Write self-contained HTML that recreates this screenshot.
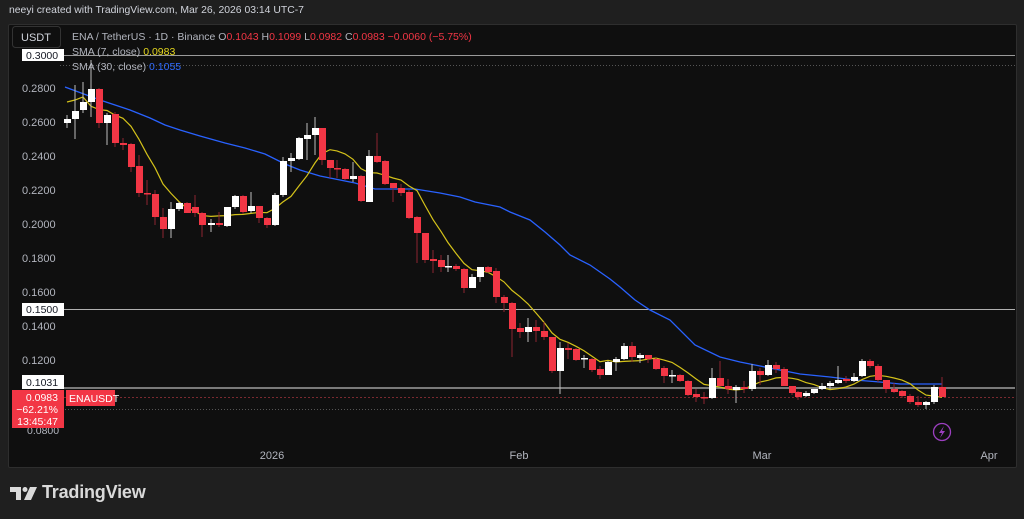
<!DOCTYPE html>
<html><head><meta charset="utf-8"><style>
html,body{margin:0;padding:0;background:#1f1f1f;width:1024px;height:519px;overflow:hidden;font-family:"Liberation Sans",sans-serif}
.t{position:absolute;left:9px;top:5px;color:#d1d4dc;font-size:10.4px}
.panel{position:absolute;left:8px;top:24px;width:1007px;height:442px;background:#0f0f0f;border:1px solid #2e2e2e;border-radius:2px}
svg{position:absolute;left:0;top:0}
.logo{position:absolute;left:42px;top:482px;color:#dadada;font-size:18px;font-weight:bold;letter-spacing:-0.2px}
</style></head><body>
<div class="t">neeyi created with TradingView.com, Mar 26, 2026 03:14 UTC-7</div>
<div class="panel"></div>
<svg id="s" width="1024" height="519" xmlns="http://www.w3.org/2000/svg" font-family="Liberation Sans, sans-serif"></svg>
<div class="logo">TradingView</div>
<script>
const C=[
[67,119,123,115,128,1],[75,119,111,85,139,1],[83,110,102,82,113,1],[91,102,89,60,117,1],[99,89,123,88,128,0],
[107,123,115,113,145,1],[115,114,143,112,147,0],[123,143,145,138,150,0],[131,144,167,143,172,0],[139,166,193,155,197,0],
[147,193,194,180,205,0],[155,194,217,190,225,0],[163,217,229,208,238,0],[171,229,209,202,238,1],[179,209,203,202,211,1],
[187,203,213,202,213,0],[195,207,213,195,217,0],[202,213,225,212,237,0],[211,225,223,219,232,1],[219,223,225,212,227,0],
[227,226,207,207,227,1],[235,207,196,195,209,1],[243,196,212,195,214,0],[251,211,206,192,213,1],[259,206,218,206,223,0],
[267,218,225,217,228,0],[275,225,195,193,226,1],[283,195,161,157,197,1],[291,161,158,153,172,1],[299,159,138,137,160,1],
[307,139,135,123,160,1],[315,135,128,117,155,1],[322,128,160,128,165,0],[330,160,168,160,178,0],[337,168,169,160,178,0],
[345,169,179,168,180,0],[353,179,176,162,182,1],[361,176,201,175,202,0],[369,202,156,150,202,1],[377,156,162,133,163,0],
[385,161,184,160,185,0],[393,183,188,183,202,0],[401,188,193,184,196,0],[409,192,218,190,219,0],[417,217,233,216,263,0],
[425,233,260,233,263,0],[433,259,261,250,273,0],[441,260,267,255,272,0],[448,267,266,255,272,1],[456,266,269,264,271,0],
[464,269,288,268,293,0],[472,288,277,274,288,1],[480,277,267,267,282,1],[488,267,272,266,273,0],[496,271,297,268,303,0],
[504,297,303,295,312,0],[512,303,329,302,357,0],[520,328,332,323,338,0],[528,332,327,318,342,1],[536,327,331,320,342,0],
[544,331,337,322,340,0],[552,337,371,338,373,0],[560,371,348,342,394,1],[568,348,350,343,359,0],[576,349,360,348,361,0],
[584,359,358,355,368,1],[592,359,370,358,372,0],[600,369,375,366,379,0],[608,375,362,361,375,1],[616,362,359,357,371,1],
[624,359,346,343,360,1],[632,346,357,342,362,0],[640,358,355,353,363,1],[648,355,359,355,363,0],[656,359,369,358,370,0],
[664,368,376,366,383,0],[672,376,375,370,383,1],[680,375,381,374,382,0],[688,381,395,380,396,0],[696,394,397,389,402,0],
[704,397,398,392,404,0],[712,398,378,368,399,1],[720,378,386,361,386,0],[728,386,389,379,394,0],[736,390,387,385,403,1],
[744,387,389,381,393,0],[752,389,371,364,391,1],[760,371,375,368,385,0],[768,375,365,360,376,1],[776,365,369,362,373,0],
[784,369,386,367,386,0],[792,386,393,386,395,0],[798,392,397,391,400,0],[806,396,393,391,397,1],[814,393,389,389,394,1],
[822,389,386,383,390,1],[830,386,383,381,389,1],[838,383,380,366,384,1],[846,379,381,376,383,0],[854,381,377,373,382,1],
[862,376,361,359,377,1],[870,361,366,359,368,0],[878,366,380,364,382,0],[886,380,389,380,393,0],[894,389,392,383,393,0],
[902,391,396,390,398,0],[910,396,402,394,404,0],[918,402,405,396,407,0],[926,405,402,401,409,1],[934,402,387,385,404,1],
[942,387,397,377,397,0]];
let h='';
h+=`<line x1="60" y1="55.5" x2="1015" y2="55.5" stroke="#9a9a9a" stroke-width="1"/>`;
h+=`<line x1="60" y1="65.5" x2="1015" y2="65.5" stroke="#555" stroke-dasharray="1,2"/>`;
h+=`<line x1="60" y1="309.5" x2="1015" y2="309.5" stroke="#b0b0b0" stroke-width="1"/>`;
h+=`<line x1="60" y1="388" x2="1015" y2="388" stroke="#7a7a7a" stroke-width="2"/>`;
h+=`<line x1="60" y1="397.5" x2="1015" y2="397.5" stroke="#7a2a30" stroke-dasharray="2,2"/>`;
h+=`<line x1="20" y1="409.5" x2="1015" y2="409.5" stroke="#555" stroke-dasharray="1,2"/>`;
[[0.28,88],[0.26,122],[0.24,156],[0.22,190],[0.20,224],[0.18,258],[0.16,292],[0.14,326],[0.12,360]].forEach(a=>{
h+=`<text x="22" y="${a[1]+4}" fill="#b2b5be" font-size="11">${a[0].toFixed(4)}</text>`;});
const B=[[65,87],[100,100],[130,110],[150,118],[165,125],[180,130],[200,136],[225,143],[245,148],[265,154],[285,164],[300,170],[320,176],[335,179],[355,183],[375,189],[390,189],[415,189],[440,193],[460,197],[475,202],[500,207],[510,212],[530,220],[545,232],[560,245],[570,255],[590,265],[610,279],[620,287],[635,300],[650,310],[670,320],[695,345],[720,357],[740,362],[760,366],[800,374],[830,377],[855,380],[880,382],[900,384],[942,384]];
h+=`<polyline fill="none" stroke="#2962ff" stroke-width="1.3" points="${B.map(p=>p.join(',')).join(' ')}"/>`;
let Y=[];for(let i=0;i<C.length;i++){let s=0,n=0;for(let j=Math.max(0,i-6);j<=i;j++){s+=C[j][2];n++;}Y.push([C[i][0],(s/n).toFixed(1)]);}
Y[0][1]=102;Y[1][1]=100;Y[2][1]=97;
h+=`<polyline fill="none" stroke="#d4c21a" stroke-width="1.2" points="${Y.map(p=>p.join(',')).join(' ')}"/>`;
C.forEach(c=>{const [x,o,cl,hi,lo,up]=c;const col=up?'#ffffff':'#f23645';const wc=up?'#bdbdbd':'#8e2431';
h+=`<line x1="${x}" y1="${hi}" x2="${x}" y2="${lo}" stroke="${wc}" stroke-width="1"/>`;
const t=Math.min(o,cl),b=Math.max(o,cl);h+=`<rect x="${x-3}" y="${t}" width="7" height="${Math.max(1.5,b-t)}" fill="${col}"/>`;});
h+=`<rect x="12.5" y="26.5" width="48" height="21" rx="3" fill="#0f0f0f" stroke="#333"/><text x="21" y="41" fill="#d1d4dc" font-size="11">USDT</text>`;
h+=`<text x="72" y="40" font-size="10.5" fill="#b2b5be">ENA / TetherUS · 1D · Binance  O<tspan fill="#f23645">0.1043</tspan>  H<tspan fill="#f23645">0.1099</tspan>  L<tspan fill="#f23645">0.0982</tspan>  C<tspan fill="#f23645">0.0983</tspan>  <tspan fill="#f23645">−0.0060 (−5.75%)</tspan></text>`;
h+=`<text x="72" y="55" font-size="10.5" fill="#b2b5be">SMA (7, close)  <tspan fill="#e6d81e">0.0983</tspan></text>`;
h+=`<text x="72" y="70" font-size="10.5" fill="#b2b5be">SMA (30, close)  <tspan fill="#2f6bff">0.1055</tspan></text>`;
h+=`<rect x="22" y="49" width="42" height="12" fill="#fff"/><text x="26" y="59" font-size="10.5" fill="#131722">0.3000</text>`;
h+=`<rect x="22" y="303" width="42" height="13" fill="#fff"/><text x="26" y="313" font-size="10.5" fill="#131722">0.1500</text>`;
h+=`<rect x="22" y="375" width="42" height="14" fill="#fff"/><text x="26" y="386" font-size="10.5" fill="#131722">0.1031</text>`;
h+=`<text x="27" y="434" font-size="10.5" fill="#b2b5be">0.0800</text>`;
h+=`<rect x="12" y="390" width="52" height="38" fill="#f23645"/>`;
h+=`<text x="58" y="401" text-anchor="end" font-size="10.5" fill="#fff">0.0983</text><text x="58" y="413" text-anchor="end" font-size="10.5" fill="#fff">−62.21%</text><text x="58" y="425" text-anchor="end" font-size="10.5" fill="#fff">13:45:47</text>`;
h+=`<rect x="66" y="390" width="49" height="16" fill="#f23645"/><text x="69" y="402" font-size="10.5" fill="#fff">ENAUSDT</text>`;
[[272,'2026'],[519,'Feb'],[762,'Mar'],[989,'Apr']].forEach(a=>{h+=`<text x="${a[0]}" y="459" text-anchor="middle" font-size="11" fill="#b2b5be">${a[1]}</text>`;});
h+=`<circle cx="942" cy="432" r="8.5" fill="none" stroke="#9c3fc0" stroke-width="1.3"/><path d="M944 426 L939 433 L942 433 L940 438 L945 431 L942 431 Z" fill="#9c3fc0"/>`;
h+=`<path d="M10 487 H21 V500 H16 V492 H10 Z" fill="#dadada"/><circle cx="25" cy="489.5" r="2.5" fill="#dadada"/><path d="M30 487 H37 L31 500 H24 Z" fill="#dadada"/>`;
document.getElementById('s').innerHTML=h;
</script>
</body></html>
